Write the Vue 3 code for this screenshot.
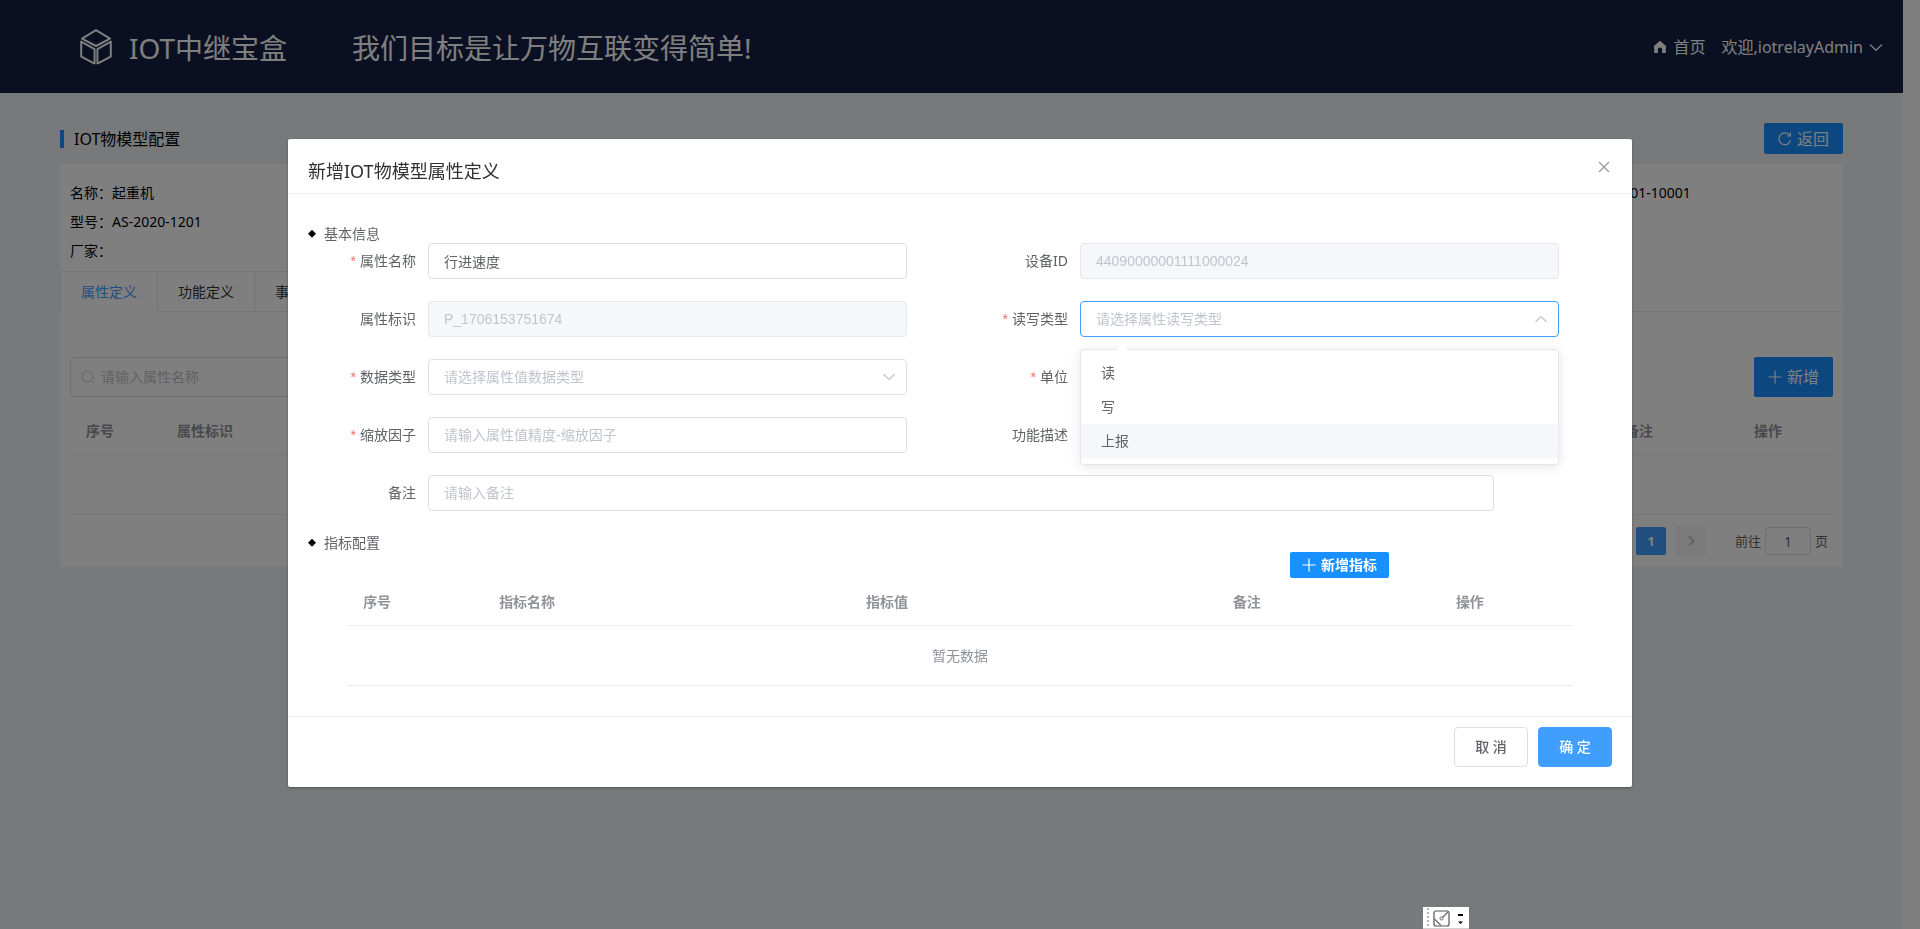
<script setup>
import { ref } from 'vue'

const info = [
  ['名称：起重机', '', '01-10001'],
  ['型号：AS-2020-1201', '', ''],
  ['厂家：', '', '']
]
const tabs = ['属性定义', '功能定义', '事件定义']
const activeTab = ref(0)

const fields = [
  { id: 'name', label: '属性名称', required: true, value: '行进速度' },
  { id: 'device', label: '设备ID', disabled: true, value: '44090000001111000024' },
  { id: 'ident', label: '属性标识', disabled: true, value: 'P_1706153751674' },
  { id: 'access', label: '读写类型', required: true, type: 'select', open: true, placeholder: '请选择属性读写类型' },
  { id: 'dtype', label: '数据类型', required: true, type: 'select', placeholder: '请选择属性值数据类型' },
  { id: 'unit', label: '单位', required: true, placeholder: '' },
  { id: 'scale', label: '缩放因子', required: true, placeholder: '请输入属性值精度-缩放因子' },
  { id: 'desc', label: '功能描述', placeholder: '' },
  { id: 'remark', label: '备注', wide: true, placeholder: '请输入备注' }
]
const options = ['读', '写', '上报']
const hovered = ref(2)
</script>

<template>
  <div class="app">
    <div class="page">
      <header class="top">
        <svg class="logo" viewBox="0 0 32 36" width="32" height="36" fill="none" stroke="#fff" stroke-width="2" stroke-linejoin="round">
          <path d="M16 1.2 30 9.6 16 17 2 9.6Z" />
          <path d="M1.2 12.6 14.6 20.2V34.6L1.2 27.6Z" />
          <path d="M30.8 12.6 17.4 20.2V34.6L30.8 27.6Z" />
        </svg>
        <h1 class="brand">IOT中继宝盒</h1>
        <p class="slogan">我们目标是让万物互联变得简单!</p>
        <nav class="links">
          <a href="#" class="home">
            <svg viewBox="0 0 14 14" width="14" height="14" fill="#fff"><path d="M7 .8 13.4 6.2 12.8 7V12.9H9.1V9.6A2.1 2.1 0 0 0 4.9 9.6V12.9H1.2V7L.6 6.2Z" /></svg>
            <span>首页</span>
          </a>
          <a href="#" class="user">
            <span>欢迎,iotrelayAdmin</span>
            <svg viewBox="0 0 14 14" width="14" height="14" fill="none" stroke="#fff" stroke-width="1.2"><path d="M1 4.5 7 10.3 13 4.5" /></svg>
          </a>
        </nav>
      </header>

      <main class="main">
        <div class="title-row">
          <h2 class="page-title">IOT物模型配置</h2>
          <button type="button" class="btn back">
            <svg viewBox="0 0 14 14" width="14" height="14" fill="none" stroke="currentColor" stroke-width="1.2"><path d="M12.6 8.4A5.9 5.9 0 1 1 11.6 3.2" /><path d="M12.4 .6V4H8.8" /></svg>
            <span>返回</span>
          </button>
        </div>

        <section class="card">
          <div v-for="(row, i) in info" :key="i" class="info-row">
            <span v-for="(cell, j) in row" :key="j">{{ cell }}</span>
          </div>
          <div class="tabs">
            <div class="tab-nav" role="tablist">
              <button v-for="(t, i) in tabs" :key="t" type="button" role="tab" class="tab" :class="{ on: i === activeTab }" @click="activeTab = i">{{ t }}</button>
            </div>
          </div>
          <div class="card-body">
            <div class="tools">
              <label class="search">
                <svg viewBox="0 0 14 14" width="14" height="14" fill="none" stroke="#c0c4cc" stroke-width="1"><circle cx="6.5" cy="6.5" r="5.5" /><path d="M10.6 10.6 13 13" /></svg>
                <input type="text" placeholder="请输入属性名称" aria-label="属性名称" />
              </label>
              <button type="button" class="btn add">
                <svg viewBox="0 0 14 14" width="14" height="14" fill="none" stroke="currentColor" stroke-width="1.2"><path d="M7 .5V13.5M.5 7H13.5" /></svg>
                <span>新增</span>
              </button>
            </div>
            <table class="grid">
              <colgroup><col class="p-no" /><col /><col class="p-note" /><col class="p-op" /></colgroup>
              <thead><tr><th>序号</th><th>属性标识</th><th>备注</th><th>操作</th></tr></thead>
              <tbody><tr><td colspan="4">暂无数据</td></tr></tbody>
            </table>
            <div class="pager">
              <button type="button" class="pg on">1</button>
              <button type="button" class="pg" disabled aria-label="下一页">
                <svg viewBox="0 0 12 12" width="12" height="12" fill="none" stroke="#c0c4cc" stroke-width="2"><path d="M4 1.5 8.5 6 4 10.5" /></svg>
              </button>
              <label class="jump"><span>前往</span><input type="text" value="1" /><span>页</span></label>
            </div>
          </div>
        </section>
      </main>
    </div>

    <div class="mask">
      <section class="dialog" role="dialog" aria-label="新增IOT物模型属性定义">
        <header class="d-head">
          <h3>新增IOT物模型属性定义</h3>
          <button type="button" class="close" aria-label="关闭">
            <svg viewBox="0 0 12 12" width="12" height="12" fill="none" stroke="#909399" stroke-width="1.1"><path d="M1 1 11 11M11 1 1 11" /></svg>
          </button>
        </header>
        <div class="d-body">
          <h4 class="sub">基本信息</h4>
          <form class="form" @submit.prevent>
            <div v-for="f in fields" :key="f.id" class="item" :class="{ wide: f.wide }">
              <label :for="f.id" :class="{ req: f.required }">{{ f.label }}</label>
              <div class="ctl">
                <select v-if="f.type === 'select'" :id="f.id" class="box" :class="{ focus: f.open }">
                  <option>{{ f.placeholder }}</option>
                </select>
                <input v-else :id="f.id" class="box" type="text" :value="f.value" :placeholder="f.placeholder" :disabled="f.disabled" />
                <svg v-if="f.type === 'select'" class="caret" viewBox="0 0 14 14" width="14" height="14" fill="none" stroke="#c0c4cc" stroke-width="1.2">
                  <path :d="f.open ? 'M1.5 9.8 7 4.6 12.5 9.8' : 'M1.5 4.2 7 9.4 12.5 4.2'" />
                </svg>
                <ul v-if="f.open" class="menu">
                  <li v-for="(o, i) in options" :key="o" :class="{ hover: i === hovered }" @mouseenter="hovered = i">{{ o }}</li>
                </ul>
              </div>
            </div>
          </form>
          <h4 class="sub">指标配置</h4>
          <button type="button" class="btn mini">
            <svg viewBox="0 0 14 14" width="14" height="14" fill="none" stroke="currentColor" stroke-width="1.2"><path d="M7 .5V13.5M.5 7H13.5" /></svg>
            <span>新增指标</span>
          </button>
          <table class="grid inner">
            <colgroup><col class="c-no" /><col /><col /><col class="c-note" /><col class="c-op" /></colgroup>
            <thead><tr><th>序号</th><th>指标名称</th><th>指标值</th><th>备注</th><th>操作</th></tr></thead>
            <tbody><tr><td colspan="5">暂无数据</td></tr></tbody>
          </table>
        </div>
        <footer class="d-foot">
          <button type="button" class="act">取 消</button>
          <button type="button" class="act primary">确 定</button>
        </footer>
      </section>
    </div>

    <div class="float-bar">
      <svg viewBox="0 0 46 22" width="46" height="22">
        <rect width="46" height="22" fill="#fff" />
        <path d="M5 1V22" stroke="#b4b4b4" stroke-width="2" stroke-dasharray="2 2" />
        <rect x="11" y="4" width="15" height="15" rx="2" fill="none" stroke="#555" stroke-width="1.2" />
        <path d="M11.5 12 18 18.5M19.5 10.5 25 5" fill="none" stroke="#666" stroke-width="1.2" />
        <circle cx="18.5" cy="11.5" r="1.5" fill="none" stroke="#666" />
        <path d="M35 7H40V9H35ZM35 14.5H40L37.5 17Z" fill="#000" />
        <path d="M0 21.5H46" stroke="#d0d0d0" />
      </svg>
    </div>
  </div>
</template>

<style>
body { margin: 0; }
</style>

<style scoped>
* { box-sizing: border-box; }
.app {
  min-height: 100vh;
  padding-right: 17px;
  background: #fff;
  font-family: "Noto Sans", "Noto Sans CJK SC", sans-serif;
  font-size: 14px;
  color: #000;
}
h1, h2, h3, h4, p, ul { margin: 0; padding: 0; font-weight: 400; }
button, input, select { font-family: inherit; font-size: 14px; margin: 0; }
button { cursor: pointer; }
svg { display: block; flex: none; }
a { color: inherit; text-decoration: none; }

.page { min-height: 100vh; background: #f0f2f5; }
.top {
  display: flex;
  align-items: center;
  height: 93px;
  padding: 0 20px 0 80px;
  background: #141f42;
  color: #fff;
  white-space: nowrap;
}
.brand, .slogan { padding-top: 2px; font-size: 28px; line-height: 40px; }
.brand { margin-left: 17px; }
.slogan { margin-left: 65px; }
.links { display: flex; gap: 16px; margin-left: auto; font-size: 16px; line-height: 24px; }
.home, .user { display: flex; align-items: center; gap: 6px; }

.main { padding: 30px 60px; }
.title-row { display: flex; align-items: center; justify-content: space-between; margin-bottom: 10px; }
.page-title { padding-left: 10px; border-left: 4px solid #1890ff; font-size: 16px; line-height: 18px; }
.btn {
  display: inline-flex;
  align-items: center;
  justify-content: center;
  gap: 5px;
  padding: 0;
  border: 0;
  border-radius: 2px;
  background: #1890ff;
  color: #fff;
  font-size: 16px;
}
.btn span { padding-bottom: 2px; }
.back { width: 79px; height: 31px; }
.add { width: 79px; height: 40px; }
.card { padding-top: 15px; border-radius: 4px; background: #fff; }
.info-row { display: grid; grid-template-columns: 44% 44% 1fr; padding-left: 10px; height: 29px; line-height: 28px; }
.tabs { display: flex; margin-top: 5px; border-bottom: 1px solid #e4e7ed; }
.tab-nav { display: flex; margin-bottom: -1px; border: 1px solid #e4e7ed; border-bottom: 0; border-radius: 4px 4px 0 0; }
.tab { height: 40px; padding: 0 20px 2px; border: 0; border-left: 1px solid #e4e7ed; border-bottom: 1px solid #e4e7ed; background: none; color: #303133; }
.tab:first-child { border-left: 0; }
.tab.on { border-bottom-color: #fff; color: #409eff; }
.card-body { padding: 45px 10px 12px; }
.tools { display: flex; justify-content: space-between; margin-bottom: 10px; }
.search { display: flex; align-items: center; gap: 6px; width: 320px; height: 40px; padding-left: 10px; border: 1px solid #dcdfe6; border-radius: 4px; }
.search input { flex: 1; min-width: 0; padding: 0 0 2px; border: 0; outline: 0; background: none; }
input::placeholder { color: #c0c4cc; opacity: 1; }

.grid { width: 100%; table-layout: fixed; border-collapse: separate; border-spacing: 0; color: #909399; }
.grid th { height: 48px; padding: 0 16px 2px; border-bottom: 1px solid #ebeef5; font-weight: 700; text-align: left; }
.grid td { height: 60px; padding: 0 0 2px; border-bottom: 1px solid #ebeef5; text-align: center; }
.p-no { width: 91px; }
.p-note { width: 129px; }
.p-op { width: 95px; }

.pager { display: flex; justify-content: flex-end; padding-top: 12px; font-size: 13px; color: #606266; }
.pg { display: flex; align-items: center; justify-content: center; width: 30px; height: 28px; margin-right: 10px; padding: 0; border: 0; border-radius: 2px; background: #f4f4f5; font-size: 13px; font-weight: 700; }
.pg.on { background: #409eff; color: #fff; }
.jump { display: flex; align-items: center; gap: 4px; margin: 0 5px 0 19px; }
.jump span { padding-bottom: 2px; }
.jump input { width: 46px; height: 28px; padding: 0; border: 1px solid #dcdfe6; border-radius: 4px; color: #606266; text-align: center; }

.mask { position: fixed; inset: 0; background: rgba(0, 0, 0, 0.5); overflow: hidden; }
.dialog { width: 70%; margin: 15vh auto 0; border-radius: 2px; background: #fff; box-shadow: 0 1px 3px rgba(0, 0, 0, 0.3); }
.d-head { display: flex; justify-content: space-between; padding: 20px 20px 10px; border-bottom: 1px solid #ebeef5; }
.d-head h3 { font-size: 18px; line-height: 24px; color: #303133; }
.close { width: 16px; height: 16px; padding: 2px; border: 0; background: none; }
.d-body { padding: 30px 20px; color: #606266; }
.sub { display: flex; align-items: center; gap: 8px; font-size: 14px; line-height: 19px; }
.sub::before { content: ""; width: 8px; height: 8px; background: #000; clip-path: polygon(50% 0, 100% 50%, 50% 100%, 0 50%); }
.form { display: grid; grid-template-columns: 1fr 1fr; row-gap: 22px; margin-bottom: 22px; }
.item { display: flex; }
.wide { grid-column: 1 / 3; }
.item label { flex: none; width: 120px; padding-right: 12px; line-height: 36px; text-align: right; }
.req::before { content: "*"; margin-right: 4px; color: #f56c6c; font-family: "Liberation Sans", sans-serif; }
.ctl { position: relative; width: calc((100% - 120px) * 0.9); }
.box {
  display: block;
  width: 100%;
  height: 36px;
  padding: 0 15px;
  border: 1px solid #dcdfe6;
  border-radius: 4px;
  outline: 0;
  background: #fff;
  color: #606266;
  font-family: "Liberation Sans", "Noto Sans CJK SC", sans-serif;
  appearance: none;
}
select.box { color: #c0c4cc; }
.box:disabled { border-color: #e4e7ed; background: #f5f7fa; color: #c0c4cc; }
.focus { border-color: #409eff; }
.caret { position: absolute; top: 11px; right: 11px; pointer-events: none; }
.menu {
  position: absolute;
  z-index: 2;
  top: 48px;
  left: 0;
  width: 100%;
  padding: 6px 0;
  border: 1px solid #e4e7ed;
  border-radius: 4px;
  background: #fff;
  box-shadow: 0 2px 12px rgba(0, 0, 0, 0.1);
  list-style: none;
}
.menu::before {
  content: "";
  position: absolute;
  top: -6px;
  left: 35px;
  width: 12px;
  height: 6px;
  background: #fff;
  clip-path: polygon(50% 0, 100% 100%, 0 100%);
}
.menu li { height: 34px; padding: 0 20px; line-height: 34px; }
.menu .hover { background: #f5f7fa; }
.mini { display: flex; width: 99px; height: 26px; margin-left: calc(75% + 4px); font-size: 14px; font-weight: 700; }
.inner { width: 94%; margin: 0 auto; }
.c-no { width: 136px; }
.c-note { width: 223px; }
.c-op { width: 133px; }
.d-foot { display: flex; justify-content: flex-end; gap: 10px; padding: 10px 20px 20px; border-top: 1px solid #ebeef5; }
.act { width: 74px; height: 40px; padding: 0 0 2px; border: 1px solid #dcdfe6; border-radius: 4px; background: #fff; color: #606266; font-weight: 500; }
.primary { border-color: #409eff; background: #409eff; color: #fff; }

.float-bar { position: fixed; bottom: 0; left: 1423px; z-index: 5; }
</style>
